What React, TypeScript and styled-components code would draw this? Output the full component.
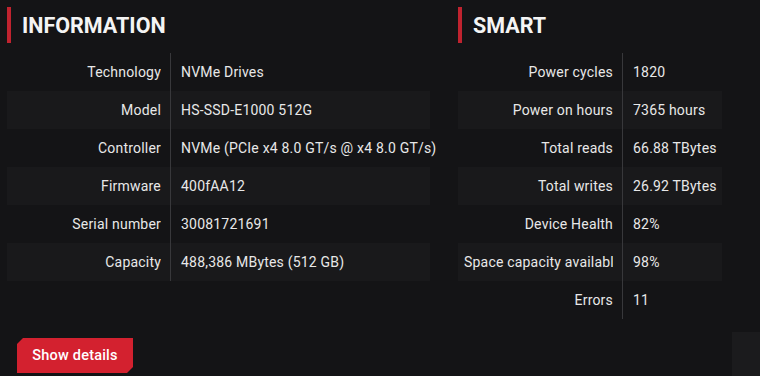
import React from "react";
import styled, { createGlobalStyle } from "styled-components";

const Global = createGlobalStyle`
  html, body { margin: 0; padding: 0; background: #141416; }
  body { font-family: Roboto, "Liberation Sans", sans-serif; color: #e6e6e6; }
  * { box-sizing: border-box; }
`;

const Page = styled.div`
  position: relative;
  width: 760px;
  height: 376px;
  overflow: hidden;
  background: #141416;
  padding: 7px 7px 0 7px;
`;

const Columns = styled.div`
  display: grid;
  grid-template-columns: 423px 264px;
  column-gap: 28px;
  align-items: start;
`;

const Section = styled.section`
  display: flex;
  flex-direction: column;
`;

const Heading = styled.h2`
  margin: 0 0 10px 0;
  height: 36px;
  display: flex;
  align-items: center;
  border-left: 4px solid #c0232f;
  padding-left: 11px;
  font-family: Roboto, "Liberation Sans", sans-serif;
  font-weight: 700;
  font-size: 21.5px;
  letter-spacing: 0;
  color: #f4f4f4;
`;

const Table = styled.div<{ $labelWidth: number }>`
  display: flex;
  flex-direction: column;
  --label-w: ${(p) => p.$labelWidth}px;
`;

const Row = styled.div<{ $striped: boolean }>`
  display: grid;
  grid-template-columns: var(--label-w) 1fr;
  height: 38px;
  background: ${(p) => (p.$striped ? "#19191b" : "transparent")};
`;

const Label = styled.div`
  padding-left: 6px;
  border-right: 1px solid #38383b;
  overflow: hidden;
`;

const LabelText = styled.div`
  margin-right: 9px;
  overflow: hidden;
  white-space: nowrap;
  text-align: right;
  line-height: 38px;
  font-size: 14px;
  letter-spacing: 0.2px;
  color: #e8e8e8;
`;

const Value = styled.div`
  display: flex;
  align-items: center;
  padding-left: 10px;
  font-size: 14px;
  letter-spacing: 0.2px;
  white-space: nowrap;
  color: #e8e8e8;
`;

const ButtonRow = styled.div`
  margin-top: 57px;
  padding-left: 10px;
`;

const ShowButton = styled.button`
  width: 116px;
  height: 35px;
  border: none;
  background: #d3212f;
  color: #fff;
  font-family: Roboto, "Liberation Sans", sans-serif;
  font-size: 14.5px;
  font-weight: 500;
  letter-spacing: 0.2px;
  clip-path: polygon(6px 0, 100% 0, 100% calc(100% - 6px), calc(100% - 6px) 100%, 0 100%, 0 6px);
  padding: 0;
  cursor: pointer;
`;

const CornerTab = styled.div`
  position: absolute;
  right: 0;
  bottom: 0;
  width: 28px;
  height: 44px;
  background: #1b1b1d;
`;

type Item = [string, string];

const info: Item[] = [
  ["Technology", "NVMe Drives"],
  ["Model", "HS-SSD-E1000 512G"],
  ["Controller", "NVMe (PCIe x4 8.0 GT/s @ x4 8.0 GT/s)"],
  ["Firmware", "400fAA12"],
  ["Serial number", "30081721691"],
  ["Capacity", "488,386 MBytes (512 GB)"],
];

const smart: Item[] = [
  ["Power cycles", "1820"],
  ["Power on hours", "7365 hours"],
  ["Total reads", "66.88 TBytes"],
  ["Total writes", "26.92 TBytes"],
  ["Device Health", "82%"],
  ["Space capacity available", "98%"],
  ["Errors", "11"],
];

const DataTable: React.FC<{ items: Item[]; labelWidth: number }> = ({ items, labelWidth }) => (
  <Table $labelWidth={labelWidth}>
    {items.map(([k, v], i) => (
      <Row key={k} $striped={i % 2 === 1}>
        <Label>
          <LabelText>{k}</LabelText>
        </Label>
        <Value>{v}</Value>
      </Row>
    ))}
  </Table>
);

export default function App() {
  return (
    <>
      <Global />
      <Page>
        <Columns>
          <Section>
            <Heading>INFORMATION</Heading>
            <DataTable items={info} labelWidth={164} />
            <ButtonRow>
              <ShowButton>Show details</ShowButton>
            </ButtonRow>
          </Section>
          <Section>
            <Heading>SMART</Heading>
            <DataTable items={smart} labelWidth={165} />
          </Section>
        </Columns>
        <CornerTab />
      </Page>
    </>
  );
}
